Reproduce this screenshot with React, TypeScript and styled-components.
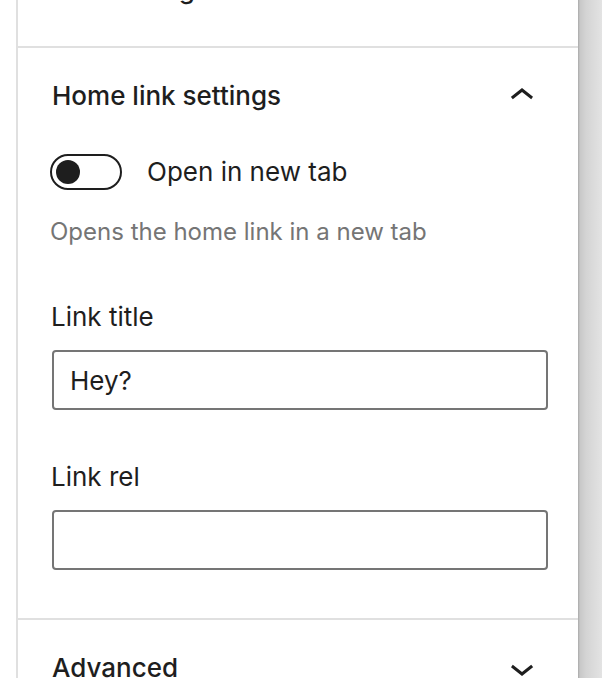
import React from "react"
import styled, { createGlobalStyle } from "styled-components"

const GlobalStyle = createGlobalStyle`
  html, body {
    margin: 0;
    padding: 0;
    background: #fff;
  }
  body {
    font-family: Inter, Roboto, "Liberation Sans", Arial, sans-serif;
    color: #1e1e1e;
    overflow: hidden;
  }
`

const Page = styled.div`
  display: flex;
  height: 678px;
  overflow: hidden;
`

const Gutter = styled.div`
  width: 16px;
  flex: none;
  background: #fff;
`

const Sidebar = styled.div`
  width: 560px;
  flex: none;
  border-left: 2px solid #e0e0e0;
  display: flex;
  flex-direction: column;
  background: #fff;
`

const Shade = styled.div`
  flex: 1;
  background: linear-gradient(90deg, #a9a9a9 0, #c8c8c8 2px, #d4d4d4 8px, #e3e3e3 100%);
`

const TopRest = styled.div`
  height: 46px;
  flex: none;
  overflow: hidden;
  display: flex;
  align-items: flex-end;
  padding: 0 32px 40px;
  box-sizing: border-box;
`

const TopText = styled.span`
  font-size: 26px;
  line-height: 32px;
  font-weight: 500;
`

const Panel = styled.section<{ $open?: boolean }>`
  border-top: 2px solid #e0e0e0;
  padding: 0 32px ${(p) => (p.$open ? "48px" : "0")};
  display: flex;
  flex-direction: column;
`

const PanelHeader = styled.div`
  height: 96px;
  display: flex;
  align-items: center;
  justify-content: space-between;
`

const PanelTitle = styled.h2`
  margin: 0 0 0 2px;
  font-size: 26px;
  font-weight: 500;
  line-height: 32px;
`

const ToggleRow = styled.div`
  margin-top: 10px;
  display: flex;
  align-items: center;
  gap: 25px;
`

const Toggle = styled.span<{ $on?: boolean }>`
  width: 72px;
  height: 36px;
  box-sizing: border-box;
  border: 2px solid #1e1e1e;
  border-radius: 18px;
  display: flex;
  align-items: center;
  padding: 0 4px;
  background: ${(p) => (p.$on ? "#1e1e1e" : "#fff")};
  &::before {
    content: "";
    width: 24px;
    height: 24px;
    border-radius: 50%;
    background: #1e1e1e;
  }
`

const ToggleLabel = styled.span`
  font-size: 26px;
  line-height: 32px;
`

const Help = styled.p`
  margin: 26px 0 0;
  font-size: 24px;
  line-height: 32px;
  color: #757575;
`

const Label = styled.label<{ $gap: number }>`
  margin-top: ${(p) => p.$gap}px;
  margin-left: 1px;
  font-size: 26px;
  line-height: 32px;
`

const Input = styled.input`
  margin: 17px 0 0 2px;
  width: 496px;
  height: 60px;
  box-sizing: border-box;
  border: 2px solid #757575;
  border-radius: 4px;
  padding: 0 16px;
  font-family: Inter, Roboto, "Liberation Sans", Arial, sans-serif;
  font-size: 26px;
  color: #1e1e1e;
  outline: none;
`

const ChevronUp = () => (
  <svg width="48" height="48" viewBox="0 0 24 24" fill="#1e1e1e">
    <path d="M6.5 12.4L12 8l5.5 4.4-.9 1.2L12 10l-4.6 3.6-1-1.2z" />
  </svg>
)

const ChevronDown = () => (
  <svg width="48" height="48" viewBox="0 0 24 24" fill="#1e1e1e">
    <path d="M17.5 11.6L12 16l-5.5-4.4.9-1.2L12 14l4.6-3.6 1 1.2z" />
  </svg>
)

export default function App() {
  return (
    <>
      <GlobalStyle />
      <Page>
        <Gutter />
        <Sidebar>
          <TopRest>
            <TopText>Text settings</TopText>
          </TopRest>

          <Panel $open>
            <PanelHeader>
              <PanelTitle>Home link settings</PanelTitle>
              <ChevronUp />
            </PanelHeader>
            <ToggleRow>
              <Toggle />
              <ToggleLabel>Open in new tab</ToggleLabel>
            </ToggleRow>
            <Help>Opens the home link in a new tab</Help>
            <Label $gap={53}>Link title</Label>
            <Input defaultValue="Hey?" />
            <Label $gap={51}>Link rel</Label>
            <Input defaultValue="" />
          </Panel>

          <Panel>
            <PanelHeader>
              <PanelTitle>Advanced</PanelTitle>
              <ChevronDown />
            </PanelHeader>
          </Panel>
        </Sidebar>
        <Shade />
      </Page>
    </>
  )
}
